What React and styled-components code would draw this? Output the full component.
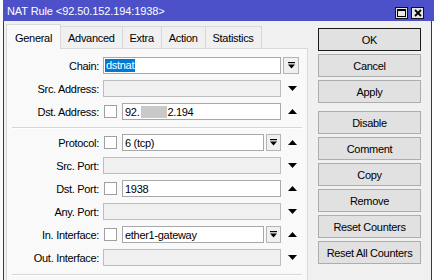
import React from "react";
import styled, { createGlobalStyle } from "styled-components";

const GlobalStyle = createGlobalStyle`
  html, body {
    margin: 0;
    padding: 0;
    background: #fff;
  }
  body {
    font-family: "Liberation Sans", Arial, sans-serif;
    font-size: 11px;
    letter-spacing: -0.3px;
    color: #000;
  }
`;

const Screen = styled.div`
  width: 434px;
  height: 280px;
  overflow: hidden;
  display: flex;
  background: #fff;
`;

const LeftEdge = styled.div`
  width: 3px;
  flex: none;
  background: #fbfbfb;
`;

const Window = styled.div`
  flex: 1;
  display: flex;
  flex-direction: column;
  min-width: 0;
`;

const TitleBar = styled.div`
  height: 21px;
  flex: none;
  display: flex;
  align-items: center;
  padding: 0 10px 0 4px;
  background: #4d51c9;
  color: #fff;
  font-size: 11px;
  letter-spacing: -0.1px;
`;

const TitleText = styled.span`
  flex: 1;
  padding-top: 1px;
`;

const TitleButtons = styled.div`
  display: flex;
  gap: 3px;
  padding-top: 4px;
`;

const TitleButton = styled.div`
  width: 13px;
  height: 12px;
  box-sizing: border-box;
  border: 1px solid #111;
  background: #e6e6e6;
  display: flex;
  align-items: center;
  justify-content: center;
`;

const Body = styled.div`
  flex: 1;
  display: flex;
  background: #f0f0f0;
  border-left: 1px solid #3a3a3a;
  padding-left: 2px;
`;

const Main = styled.div`
  width: 302px;
  flex: none;
  display: flex;
  flex-direction: column;
  padding-top: 3px;
`;

const TabBar = styled.div`
  height: 24px;
  display: flex;
  align-items: flex-end;
`;

const Tab = styled.div`
  box-sizing: border-box;
  height: ${({ $active }) => ($active ? "25px" : "22px")};
  margin-bottom: ${({ $active }) => ($active ? "-1px" : "0")};
  margin-left: -1px;
  padding: ${({ $active }) => ($active ? "2px 8px 0" : "0 7px")};
  display: flex;
  align-items: center;
  border: 1px solid #d9d9d9;
  border-bottom: none;
  background: ${({ $active }) => ($active ? "#f9f9f9" : "#f0f0f0")};
  position: relative;
  z-index: ${({ $active }) => ($active ? 2 : 0)};
  &:first-child {
    margin-left: 0;
  }
`;

const Panel = styled.div`
  flex: 1;
  position: relative;
  z-index: 1;
  background: #f9f9f9;
  border: 1px solid #d9d9d9;
  border-bottom: none;
  padding-top: 5px;
`;

const Row = styled.div`
  height: 23px;
  display: flex;
  align-items: center;
`;

const Label = styled.div`
  width: 96px;
  box-sizing: border-box;
  padding-right: 4px;
  text-align: right;
  flex: none;
  white-space: nowrap;
`;

const Control = styled.div`
  width: 178px;
  flex: none;
  display: flex;
  align-items: center;
`;

const Side = styled.div`
  width: 18px;
  margin-left: 2px;
  flex: none;
  display: flex;
  align-items: center;
  justify-content: ${({ $left }) => ($left ? "flex-start" : "center")};
`;

const Field = styled.div`
  flex: 1;
  height: 17px;
  box-sizing: border-box;
  border: 1px solid ${({ $disabled }) => ($disabled ? "#bdbdbd" : "#a8a8a8")};
  background: ${({ $disabled }) => ($disabled ? "#f0f0f0" : "#fff")};
  display: flex;
  align-items: center;
  padding-left: ${({ $pad }) => $pad ?? 2}px;
  white-space: nowrap;
  overflow: hidden;
`;

const Selected = styled.span`
  background: #0078d7;
  color: #fff;
  padding: 0 1px;
  line-height: 13px;
`;

const Blurred = styled.span`
  display: inline-block;
  width: 26px;
  height: 12px;
  margin-left: 2px;
  background: #c9c9c9;
  filter: blur(0.6px);
`;

const Check = styled.div`
  width: 13px;
  height: 13px;
  box-sizing: border-box;
  border: 1px solid #a0a0a0;
  background: #fff;
  margin: 0 5px 0 1px;
  flex: none;
`;

const ComboButton = styled.div`
  width: ${({ $wide }) => ($wide ? 16 : 15)}px;
  height: 17px;
  box-sizing: border-box;
  border: 1px solid #b4b4b4;
  background: #f0f0f0;
  margin-left: ${({ $inline }) => ($inline ? "2px" : "0")};
  flex: none;
  display: flex;
  align-items: center;
  justify-content: center;
`;

const Separator = styled.div`
  height: 1px;
  background: #d6d6d6;
  border-bottom: 1px solid #fff;
  margin: ${({ $top }) => $top}px 5px 2px;
`;

const ButtonColumn = styled.div`
  width: 103px;
  margin-left: 10px;
  flex: none;
  display: flex;
  flex-direction: column;
  gap: 3px;
  padding-top: 7px;
`;

const Button = styled.div`
  height: 23px;
  box-sizing: border-box;
  border: 1px solid ${({ $default }) => ($default ? "#1a1a1a" : "#adadad")};
  background: #e1e1e1;
  display: flex;
  align-items: center;
  justify-content: center;
  margin-top: ${({ $gapBefore }) => ($gapBefore ? "5px" : "0")};
`;

const Spacer = styled.div`
  flex: 1;
`;

const RightEdge = styled.div`
  width: 2px;
  flex: none;
  background: #fff;
  border-left: 1px solid #3a3a3a;
`;

function Triangle({ up }) {
  return (
    <svg width="9" height="5" viewBox="0 0 9 5">
      <polygon points={up ? "4.5,0 9,5 0,5" : "0,0 9,0 4.5,5"} fill="#000" />
    </svg>
  );
}

function ComboGlyph() {
  return (
    <svg width="7" height="7" viewBox="0 0 7 7">
      <rect x="0" y="0" width="7" height="1.2" fill="#000" />
      <polygon points="0,2.5 7,2.5 3.5,6.5" fill="#000" />
    </svg>
  );
}

function MaxIcon() {
  return (
    <svg width="9" height="8" viewBox="0 0 9 8">
      <rect x="0.5" y="0.5" width="8" height="7" fill="none" stroke="#000" />
      <rect x="0" y="0" width="9" height="2" fill="#000" />
    </svg>
  );
}

function CloseIcon() {
  return (
    <svg width="8" height="8" viewBox="0 0 8 8">
      <path d="M1 1 L7 7 M7 1 L1 7" stroke="#000" strokeWidth="1.8" />
    </svg>
  );
}

const tabs = ["General", "Advanced", "Extra", "Action", "Statistics"];
const buttons = [
  "OK",
  "Cancel",
  "Apply",
  "Disable",
  "Comment",
  "Copy",
  "Remove",
  "Reset Counters",
  "Reset All Counters",
];

function PlainRow({ label, down }) {
  return (
    <Row>
      <Label>{label}</Label>
      <Control>
        <Field $disabled />
      </Control>
      <Side>
        <Triangle up={!down} />
      </Side>
    </Row>
  );
}

function CheckRow({ label, combo, children }) {
  return (
    <Row>
      <Label>{label}</Label>
      <Control>
        <Check />
        <Field>{children}</Field>
        {combo && (
          <ComboButton $inline>
            <ComboGlyph />
          </ComboButton>
        )}
      </Control>
      <Side>
        <Triangle up />
      </Side>
    </Row>
  );
}

export default function App() {
  return (
    <>
      <GlobalStyle />
      <Screen>
        <LeftEdge />
        <Window>
          <TitleBar>
            <TitleText>NAT Rule &lt;92.50.152.194:1938&gt;</TitleText>
            <TitleButtons>
              <TitleButton>
                <MaxIcon />
              </TitleButton>
              <TitleButton>
                <CloseIcon />
              </TitleButton>
            </TitleButtons>
          </TitleBar>
          <Body>
            <Main>
              <TabBar>
                {tabs.map((t, i) => (
                  <Tab key={t} $active={i === 0}>
                    {t}
                  </Tab>
                ))}
              </TabBar>
              <Panel>
                <Row>
                  <Label>Chain:</Label>
                  <Control>
                    <Field $pad={1}>
                      <Selected>dstnat</Selected>
                    </Field>
                  </Control>
                  <Side $left>
                    <ComboButton $wide>
                      <ComboGlyph />
                    </ComboButton>
                  </Side>
                </Row>
                <PlainRow label="Src. Address:" down />
                <CheckRow label="Dst. Address:">
                  92.<Blurred />2.194
                </CheckRow>
                <Separator $top={4} />
                <CheckRow label="Protocol:" combo>
                  6 (tcp)
                </CheckRow>
                <PlainRow label="Src. Port:" down />
                <CheckRow label="Dst. Port:">1938</CheckRow>
                <PlainRow label="Any. Port:" down />
                <CheckRow label="In. Interface:" combo>
                  ether1-gateway
                </CheckRow>
                <PlainRow label="Out. Interface:" down />
                <Separator $top={5} />
              </Panel>
            </Main>
            <ButtonColumn>
              {buttons.map((b, i) => (
                <Button key={b} $default={i === 0} $gapBefore={b === "Disable"}>
                  {b}
                </Button>
              ))}
            </ButtonColumn>
            <Spacer />
            <RightEdge />
          </Body>
        </Window>
      </Screen>
    </>
  );
}
